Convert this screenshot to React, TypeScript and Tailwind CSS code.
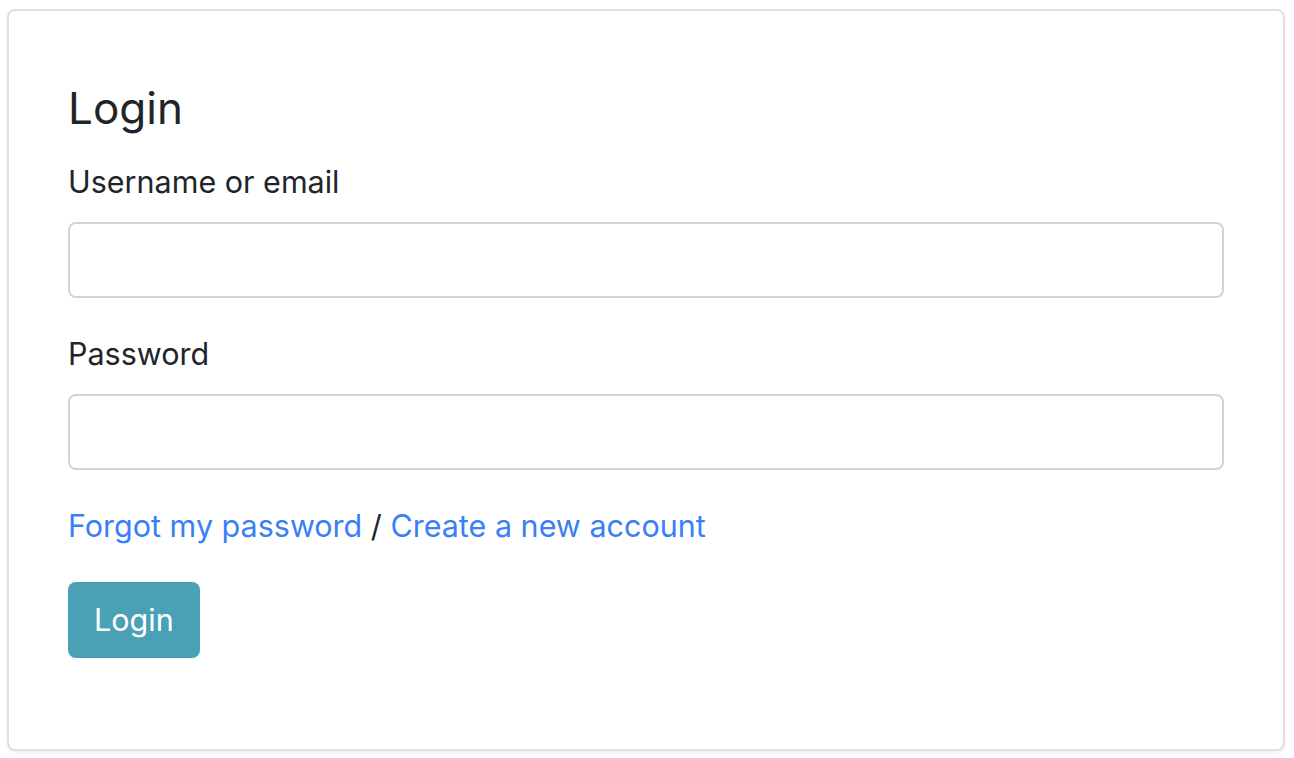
import React from 'react';

export default function App() {
  return (
    <div className="min-h-[758px] bg-white pl-[7px] pr-[9px] pt-[9px] font-['Inter','Noto_Sans',sans-serif] text-[#212529]">
      <div className="rounded-[8px] border-2 border-[#e0e0e0] bg-white px-[59px] pt-[70px] pb-[91px] shadow-[0_2px_3px_rgba(0,0,0,0.06)]">
        <h4 className="mb-[23px] text-[44px] leading-[54px] font-normal">Login</h4>
        <form onSubmit={(e) => e.preventDefault()}>
          <div className="mb-8">
            <label htmlFor="username" className="mb-4 block text-[30.5px] leading-[48px]">
              Username or email
            </label>
            <input
              id="username"
              type="text"
              className="block h-[76px] w-full rounded-[8px] border-2 border-[#ced4da] px-6 text-[30.5px] outline-none"
            />
          </div>
          <div className="mb-8">
            <label htmlFor="password" className="mb-4 block text-[30.5px] leading-[48px]">
              Password
            </label>
            <input
              id="password"
              type="password"
              className="block h-[76px] w-full rounded-[8px] border-2 border-[#ced4da] px-6 text-[30.5px] outline-none"
            />
          </div>
          <div className="mb-8 text-[30.5px] leading-[48px]">
            <a href="#" className="text-[#3a7ff5]">Forgot my password</a>
            {' / '}
            <a href="#" className="text-[#3a7ff5]">Create a new account</a>
          </div>
          <button
            type="submit"
            className="h-[76px] rounded-[8px] border-2 border-transparent bg-[#4aa1b6] px-6 text-[30.5px] leading-[48px] text-white"
          >
            Login
          </button>
        </form>
      </div>
    </div>
  );
}
